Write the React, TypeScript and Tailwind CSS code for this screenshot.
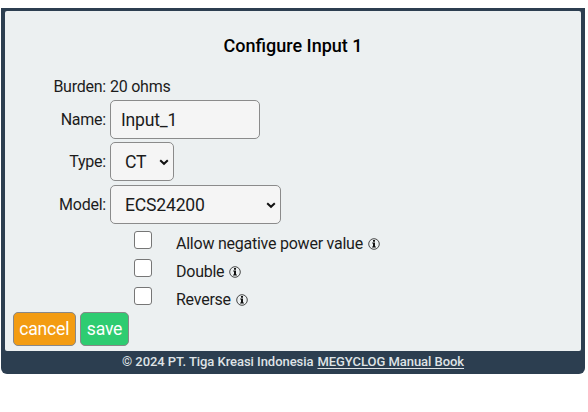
import React from "react";

function InfoIcon() {
  return (
    <svg className="ml-[5px] h-3 w-3 shrink-0" viewBox="0 0 12 12" fill="none">
      <circle cx="6" cy="6" r="5.3" stroke="#333" strokeWidth="0.9" />
      <path d="M5 2h2v1.7H5zM4.2 4.5H7v4.1h.9v1H4.1v-1H5V5.4h-.8z" fill="#111" />
    </svg>
  );
}

function Chevron() {
  return (
    <svg className="h-[7px] w-[10px] shrink-0" viewBox="0 0 10 7" fill="none">
      <path d="M1.2 1.2 5 4.8l3.8-3.6" stroke="#111" strokeWidth="2" />
    </svg>
  );
}

function Row({ label, className, children }: { label: string; className: string; children: React.ReactNode }) {
  return (
    <div className={`flex items-center ${className}`}>
      <div className="mr-1 w-[101px] text-right">{label}</div>
      {children}
    </div>
  );
}

function Check({ label }: { label: string }) {
  return (
    <label className="flex h-7">
      <input type="checkbox" className="mt-[3px] h-[18px] w-[18px] shrink-0 appearance-none rounded-[3px] border border-[#767676] bg-white" />
      <span className="ml-6 mt-1 flex h-6 items-center">
        {label}
        <InfoIcon />
      </span>
    </label>
  );
}

const field = "flex h-[39px] items-center rounded-[5px] border border-[#8b8b8b] bg-[#f5f5f5] text-[17.6px] tracking-[-0.2px] pt-px";

export default function App() {
  return (
    <div className="h-[412px] w-[588px] bg-white pl-px pt-2 font-['Roboto',sans-serif] text-[16px] leading-5 tracking-[-0.24px] text-[#1c1c1c]">
      <div className="flex h-[366px] w-[584px] flex-col rounded-b-[6px] bg-[#2c3e50] px-1 pt-[3px]">
        <main className="h-[340px] rounded-[2px] bg-[#ecf0f1]">
          <h1 className="pt-[25px] text-center text-[18px] font-medium leading-5 tracking-normal text-black">Configure Input 1</h1>
          <Row label="Burden:" className="mt-5 h-[22px]">20 ohms</Row>
          <Row label="Name:" className="mt-[2px] h-[39px]">
            <input className={`${field} w-[150px] px-[10px]`} defaultValue="Input_1" />
          </Row>
          <Row label="Type:" className="mt-[3px] h-[39px]">
            <button className={`${field} w-16 justify-between pl-[14px] pr-1`}>CT<Chevron /></button>
          </Row>
          <Row label="Model:" className="mt-1 h-[39px]">
            <button className={`${field} w-[171px] justify-between pl-[14px] pr-1`}>ECS24200<Chevron /></button>
          </Row>
          <div className="ml-[129px] mt-1">
            <Check label="Allow negative power value" />
            <Check label="Double" />
            <Check label="Reverse" />
          </div>
          <div className="ml-[7.5px] flex gap-1 text-[17.6px] text-white">
            <button className="h-[34px] w-[63.5px] rounded-[5px] border border-[#888] bg-[#f39c12]">cancel</button>
            <button className="h-[34px] w-[49px] rounded-[5px] border border-[#888] bg-[#2ecc71]">save</button>
          </div>
        </main>
        <footer className="flex h-[22px] items-center justify-center gap-1 text-[13px] font-medium tracking-[-0.05px] text-[#dfe3e6]">
          <span>© 2024 PT. Tiga Kreasi Indonesia</span>
          <a className="underline underline-offset-2" href="#">MEGYCLOG Manual Book</a>
        </footer>
      </div>
    </div>
  );
}
